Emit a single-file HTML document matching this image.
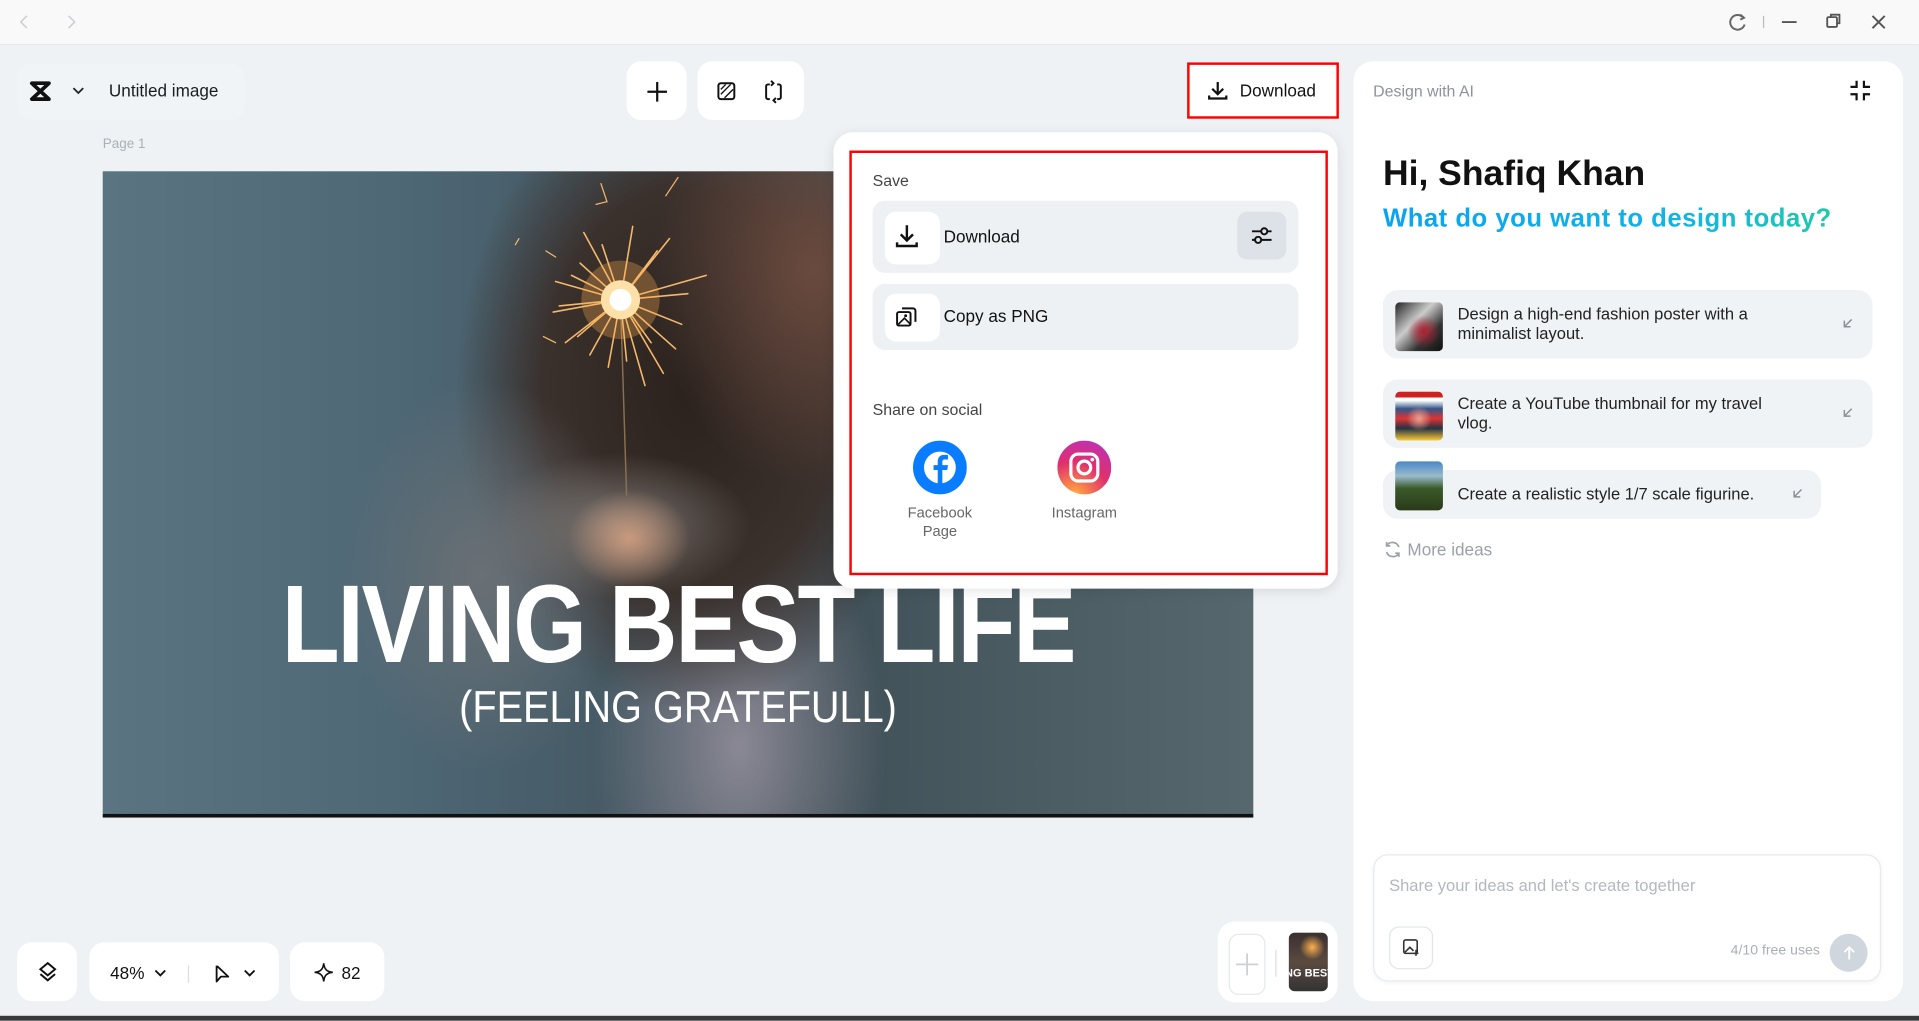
<!DOCTYPE html>
<html><head><meta charset="utf-8">
<style>
*{box-sizing:border-box;margin:0;padding:0}
html,body{width:1919px;height:1021px;overflow:hidden;background:#eef2f5;font-family:"Liberation Sans",sans-serif;color:#1b1d22}
#w{position:absolute;left:0;top:0;width:1568px;height:834px;transform:scale(1.22385);transform-origin:0 0;background:#eef2f5}
.a{position:absolute}
.wb{background:#fff;border-radius:12px}
svg{display:block}
</style></head><body><div id="w">
<!-- title bar -->
<div class="a" style="left:0;top:0;width:1568px;height:37px;background:#f9f9f9;border-bottom:1px solid #e6e8ea"></div>
<svg class="a" style="left:14px;top:11px" width="60" height="14"><path d="M8 2L3 7l5 5M42 2l5 5-5 5" stroke="#c9ccd0" stroke-width="1.2" fill="none"/></svg>
<svg class="a" style="left:1408px;top:8px" width="140" height="20"><path d="M16 6a6 6 0 1 0 1.5 6" stroke="#666" stroke-width="1.6" fill="none"/><path d="M14 4l3 2.5-3 1.5" stroke="#666" stroke-width="1.6" fill="none"/><path d="M33 5v10" stroke="#bbb" stroke-width="1"/><path d="M48 10h12" stroke="#555" stroke-width="1.5"/><rect x="85" y="6" width="8" height="8" rx="1" stroke="#555" stroke-width="1.5" fill="none"/><path d="M88 6V4h7v7h-2" stroke="#555" stroke-width="1.5" fill="none"/><path d="M122 5l10 10M132 5l-10 10" stroke="#555" stroke-width="1.6"/></svg>

<!-- top left pill -->
<div class="a" style="left:14px;top:52px;width:186px;height:46px;background:#f1f4f7;border-radius:12px"></div>
<svg class="a" style="left:23px;top:66px" width="50" height="18"><path d="M3 2h14L3 15h14z" stroke="#111" stroke-width="3" fill="none" stroke-linejoin="round"/><path d="M37 6l4 4 4-4" stroke="#222" stroke-width="1.5" fill="none"/></svg>
<div class="a" style="left:89px;top:66px;font-size:14px;font-weight:500;color:#1b1d22">Untitled image</div>

<div class="a wb" style="left:512px;top:50px;width:49px;height:48px"></div>
<svg class="a" style="left:528px;top:66px" width="18" height="18"><path d="M9 1v16M1 9h16" stroke="#111" stroke-width="1.8"/></svg>
<div class="a wb" style="left:570px;top:50px;width:87px;height:48px"></div>
<svg class="a" style="left:585px;top:65px" width="60" height="20"><rect x="2" y="3" width="13" height="13" rx="2" stroke="#111" stroke-width="1.6" fill="none"/><path d="M4 12l8-8M4 8l4-4M7 15l7-7" stroke="#111" stroke-width="1.1"/><path d="M44 4h-1.5a1.5 1.5 0 0 0-1.5 1.5v9a1.5 1.5 0 0 0 1.5 1.5H44M50 4h1.5a1.5 1.5 0 0 1 1.5 1.5v9a1.5 1.5 0 0 1-1.5 1.5H50M45 1l2 2-2 2M49 19l-2-2 2-2" stroke="#111" stroke-width="1.6" fill="none"/></svg>

<!-- Download button -->
<div class="a" style="left:970px;top:51px;width:124px;height:46px;background:#fff;border:2px solid #f00"></div>
<svg class="a" style="left:986px;top:65px" width="18" height="18"><path d="M9 2v10M4.5 7.5L9 12l4.5-4.5M2 13v2.5h14V13" stroke="#111" stroke-width="1.8" fill="none"/></svg>
<div class="a" style="left:1013px;top:66px;font-size:14px;color:#111">Download</div>

<div class="a" style="left:84px;top:112px;font-size:11px;color:#a9b0b8">Page 1</div>

<!-- photo -->
<div class="a" style="left:84px;top:140px;width:940px;height:528px;overflow:hidden;background:#3f525c;border-bottom:3px solid #111">
 <div class="a" style="left:0;top:0;width:940px;height:528px;background:
 radial-gradient(ellipse 50px 40px at 430px 300px,#c99a7e,transparent),
 radial-gradient(ellipse 110px 60px at 420px 290px,#7a7470,transparent),
 radial-gradient(ellipse 150px 200px at 310px 330px,#6a7075,transparent 80%),
 radial-gradient(ellipse 130px 180px at 580px 80px,#6a4a3e,transparent),
 radial-gradient(ellipse 240px 330px at 480px 180px,#2b221e 0%,#3a302c 50%,transparent 80%),
 radial-gradient(ellipse 120px 200px at 520px 470px,#8a8894,transparent),
 linear-gradient(90deg,#5a7482 0%,#4e6876 25%,#3e4e56 60%,#56686e 100%)"></div>
 <svg class="a" style="left:330px;top:0" width="200" height="300">
  <g stroke="#ffc070" stroke-width="1.3" stroke-linecap="round" opacity=".95">
   <path d="M93 105L60 75M93 105l40-50M93 105l-50 5M93 105l55-5M93 105l45 40M93 105l-10 55M93 105l20 70M93 105l-45 35M93 105l10-60M93 105l-30-55M93 105l70-20M93 105L40 90M93 105l35 60M93 105l-25 45M93 105l30-40M93 105l-40-20M93 105l50 20M93 105l-35 30M93 105l5 50M93 105l-15-45M93 105l25 35M93 105l-55 10"/>
   <path d="M77 10l5 15M73 27l8-2M40 70l-8-5M30 135l10 5M7 60l3-5M130 20l10-15" stroke-width="1"/>
  </g>
  <path d="M93 105l5 160" stroke="#8a7050" stroke-width="1.2"/>
  <circle cx="93" cy="105" r="32" fill="#ffb050" opacity=".3"/>
  <circle cx="93" cy="105" r="16" fill="#ffe0a8"/>
  <circle cx="93" cy="105" r="9" fill="#fff"/>
 </svg>
 <div class="a" style="left:0;top:326px;width:940px;text-align:center;font-size:90px;font-weight:700;color:#fff;letter-spacing:-2px;line-height:90px;transform:scaleX(.86)">LIVING BEST LIFE</div>
 <div class="a" style="left:0;top:418px;width:940px;text-align:center;font-size:36px;color:#fff;line-height:40px;transform:scaleX(.9)">(FEELING GRATEFULL)</div>
</div>

<!-- popup -->
<div class="a" style="left:681px;top:108px;width:412px;height:373px;background:#fff;border-radius:16px;box-shadow:0 2px 10px rgba(0,0,0,.1)"></div>
<div class="a" style="left:694px;top:123px;width:391px;height:347px;border:2px solid #f00"></div>
<div class="a" style="left:713px;top:140px;font-size:13px;color:#444">Save</div>
<div class="a" style="left:713px;top:164px;width:348px;height:59px;background:#eef1f4;border-radius:10px"></div>
<div class="a wb" style="left:723px;top:173px;width:45px;height:43px;border-radius:9px"></div>
<svg class="a" style="left:731px;top:183px" width="20" height="20"><path d="M10 1v12M5 8.5l5 5 5-5M2 15v3h16v-3" stroke="#111" stroke-width="2" fill="none"/></svg>
<div class="a" style="left:771px;top:185px;font-size:14px;color:#111">Download</div>
<div class="a" style="left:1011px;top:173px;width:40px;height:39px;background:#dde2e8;border-radius:8px"></div>
<svg class="a" style="left:1021px;top:183px" width="20" height="20"><path d="M2 6h16M2 13h16" stroke="#111" stroke-width="1.6"/><circle cx="12" cy="6" r="2.5" fill="#dde2e8" stroke="#111" stroke-width="1.6"/><circle cx="7" cy="13" r="2.5" fill="#dde2e8" stroke="#111" stroke-width="1.6"/></svg>
<div class="a" style="left:713px;top:232px;width:348px;height:54px;background:#eef1f4;border-radius:10px"></div>
<div class="a wb" style="left:723px;top:240px;width:45px;height:39px;border-radius:9px"></div>
<svg class="a" style="left:731px;top:250px" width="20" height="20"><rect x="2" y="5" width="11" height="11" rx="1.5" stroke="#111" stroke-width="1.6" fill="none"/><path d="M6 2h9a2 2 0 0 1 2 2v9" stroke="#111" stroke-width="1.6" fill="none"/><path d="M3 15l5-5 5 5" stroke="#111" stroke-width="1.4" fill="none"/><circle cx="9" cy="8" r="1.2" fill="#111"/></svg>
<div class="a" style="left:771px;top:250px;font-size:14px;color:#111">Copy as PNG</div>
<div class="a" style="left:713px;top:327px;font-size:13px;color:#444">Share on social</div>
<svg class="a" style="left:746px;top:360px" width="44" height="44"><circle cx="22" cy="22" r="22" fill="#0a7cff"/><circle cx="22" cy="22" r="13" fill="#fff"/><path d="M24 37V24h4l.6-4H24v-2.5c0-1.2.5-2 2-2h2.6v-3.6c-.8-.1-2-.2-3.2-.2-3.2 0-5.2 1.9-5.2 5.4V20h-3.4v4h3.4v13z" fill="#0a7cff"/></svg>
<div class="a" style="left:728px;top:412px;width:80px;text-align:center;font-size:12px;color:#666;line-height:15px">Facebook<br>Page</div>
<svg class="a" style="left:864px;top:360px" width="44" height="44"><defs><radialGradient id="ig" cx="30%" cy="107%" r="150%"><stop offset="0" stop-color="#fdf497"/><stop offset=".1" stop-color="#fd9a45"/><stop offset=".45" stop-color="#e0306b"/><stop offset=".7" stop-color="#c530a8"/><stop offset="1" stop-color="#6a4bd6"/></radialGradient></defs><circle cx="22" cy="22" r="22" fill="url(#ig)"/><rect x="11" y="11" width="22" height="22" rx="6" stroke="#fff" stroke-width="2.6" fill="none"/><circle cx="22" cy="22" r="5.2" stroke="#fff" stroke-width="2.6" fill="none"/><circle cx="28.5" cy="15.5" r="1.5" fill="#fff"/></svg>
<div class="a" style="left:846px;top:412px;width:80px;text-align:center;font-size:12px;color:#666">Instagram</div>

<!-- right panel -->
<div class="a" style="left:1106px;top:50px;width:449px;height:768px;background:#fff;border-radius:16px"></div>
<div class="a" style="left:1122px;top:67px;font-size:13px;color:#8c939b">Design with AI</div>
<svg class="a" style="left:1511px;top:65px" width="18" height="18"><path d="M6 1v5H1M12 1v5h5M6 17v-5H1M12 17v-5h5" stroke="#111" stroke-width="1.8" fill="none"/></svg>
<div class="a" style="left:1130px;top:126px;font-size:29px;font-weight:700;color:#111;letter-spacing:0px">Hi, Shafiq Khan</div>
<div class="a" style="left:1130px;top:167px;font-size:21px;font-weight:700;letter-spacing:.4px;background:linear-gradient(90deg,#0aa3f0,#0fb5e8 65%,#20c9a8);-webkit-background-clip:text;background-clip:text;color:transparent">What do you want to design today?</div>

<div class="a" style="left:1130px;top:237px;width:400px;height:56px;background:#f0f3f6;border-radius:12px"></div>
<div class="a" style="left:1140px;top:247px;width:39px;height:40px;border-radius:4px;background:radial-gradient(circle at 60% 60%,#b02030,transparent 40%),linear-gradient(135deg,#222,#ccc 40%,#333 70%,#111)"></div>
<div class="a" style="left:1191px;top:249px;font-size:13.5px;line-height:16px;color:#222">Design a high-end fashion poster with a<br>minimalist layout.</div>
<div class="a" style="left:1130px;top:310px;width:400px;height:56px;background:#f0f3f6;border-radius:12px"></div>
<div class="a" style="left:1140px;top:320px;width:39px;height:40px;border-radius:4px;background:radial-gradient(circle at 50% 55%,#e9a090,transparent 35%),linear-gradient(180deg,#c22 0 12%,#fff 12% 18%,#358 35%,#d33 55%,#234 75%,#fc3)"></div>
<div class="a" style="left:1191px;top:322px;font-size:13.5px;line-height:16px;color:#222">Create a YouTube thumbnail for my travel<br>vlog.</div>
<div class="a" style="left:1130px;top:384px;width:358px;height:40px;background:#f0f3f6;border-radius:12px"></div>
<div class="a" style="left:1140px;top:377px;width:39px;height:40px;border-radius:4px;background:linear-gradient(180deg,#4a88c8 0,#9bc 30%,#3a5a2a 55%,#2a3a1a)"></div>
<div class="a" style="left:1191px;top:396px;font-size:13.5px;color:#222">Create a realistic style 1/7 scale figurine.</div>
<svg class="a" style="left:1504px;top:258px" width="20" height="90"><path d="M9 3L3 9M3 4v5h5" stroke="#8a9097" stroke-width="1.2" fill="none"/><path d="M9 76l-6 6M3 77v5h5" stroke="#8a9097" stroke-width="1.2" fill="none"/></svg>
<svg class="a" style="left:1463px;top:397px" width="12" height="12"><path d="M9 3L3 9M3 4v5h5" stroke="#8a9097" stroke-width="1.2" fill="none"/></svg>
<svg class="a" style="left:1130px;top:441px" width="16" height="16"><path d="M13 6a5.5 5.5 0 0 0-10-1M3 10a5.5 5.5 0 0 0 10 1M3 2v3h3M13 14v-3h-3" stroke="#9aa1a8" stroke-width="1.4" fill="none"/></svg>
<div class="a" style="left:1150px;top:441px;font-size:14px;color:#9aa1a8">More ideas</div>

<div class="a" style="left:1122px;top:698px;width:415px;height:104px;background:#fff;border:1px solid #e7eaee;border-radius:12px;box-shadow:0 1px 4px rgba(0,0,0,.05)"></div>
<div class="a" style="left:1135px;top:716px;font-size:13.5px;color:#b3b8be">Share your ideas and let's create together</div>
<div class="a" style="left:1135px;top:757px;width:36px;height:35px;border:1px solid #e2e5e9;border-radius:8px"></div>
<svg class="a" style="left:1145px;top:766px" width="16" height="16"><rect x="2" y="2" width="11" height="11" rx="1.5" stroke="#333" stroke-width="1.3" fill="none"/><path d="M3 12l4-4 3 3M12 10v5M10 13h4" stroke="#333" stroke-width="1.3" fill="none"/></svg>
<div class="a" style="left:1390px;top:771px;width:97px;text-align:right;font-size:11.5px;color:#a9afb5">4/10 free uses</div>
<div class="a" style="left:1495px;top:763px;width:31px;height:31px;border-radius:50%;background:#cfd6de"></div>
<svg class="a" style="left:1503px;top:771px" width="16" height="16"><path d="M8 13V3M4 7l4-4 4 4" stroke="#fff" stroke-width="1.5" fill="none"/></svg>

<!-- bottom left -->
<div class="a wb" style="left:14px;top:770px;width:49px;height:48px"></div>
<svg class="a" style="left:30px;top:785px" width="18" height="18"><path d="M9 2l6 5-6 5-6-5z" stroke="#111" stroke-width="1.6" fill="none"/><path d="M3 11l6 5 6-5" stroke="#111" stroke-width="1.6" fill="none"/></svg>
<div class="a wb" style="left:73px;top:770px;width:155px;height:48px"></div>
<div class="a" style="left:90px;top:787px;font-size:14px;color:#111">48%</div>
<svg class="a" style="left:125px;top:789px" width="90" height="14"><path d="M2 4l4 4 4-4" stroke="#111" stroke-width="1.5" fill="none"/><path d="M29 -1v16" stroke="#ddd" stroke-width="1"/><path d="M52 0v13l3.5-4h6z" stroke="#111" stroke-width="1.5" fill="none" stroke-linejoin="round"/><path d="M75 4l4 4 4-4" stroke="#111" stroke-width="1.5" fill="none"/></svg>
<div class="a wb" style="left:237px;top:770px;width:77px;height:48px"></div>
<svg class="a" style="left:257px;top:787px" width="15" height="15"><path d="M7.5 0C8 5 10 7 15 7.5 10 8 8 10 7.5 15 7 10 5 8 0 7.5 5 7 7 5 7.5 0z" stroke="#111" stroke-width="1.3" fill="none"/></svg>
<div class="a" style="left:279px;top:787px;font-size:14px;color:#111">82</div>

<!-- bottom right -->
<div class="a" style="left:995px;top:753px;width:98px;height:66px;background:#fff;border-radius:14px"></div>
<div class="a" style="left:1004px;top:763px;width:30px;height:50px;border:1px solid #e6e9ec;border-radius:8px"></div>
<svg class="a" style="left:1009px;top:778px" width="20" height="20"><path d="M10 1v18M1 10h18" stroke="#ccd1d6" stroke-width="1.5"/></svg>
<div class="a" style="left:1042px;top:776px;width:1px;height:22px;background:#ddd"></div>
<div class="a" style="left:1053px;top:762px;width:32px;height:48px;border-radius:5px;background:radial-gradient(circle at 60% 25%,#ffb050,transparent 25%),linear-gradient(180deg,#3a3030,#5a4a40 50%,#333);overflow:hidden"><div style="margin-top:28px;font-size:9px;font-weight:700;color:#fff;white-space:nowrap;margin-left:-3px">NG BEST</div></div>

<div class="a" style="left:0;top:830px;width:1568px;height:4px;background:#3a3a3a"></div>
</div></body></html>
